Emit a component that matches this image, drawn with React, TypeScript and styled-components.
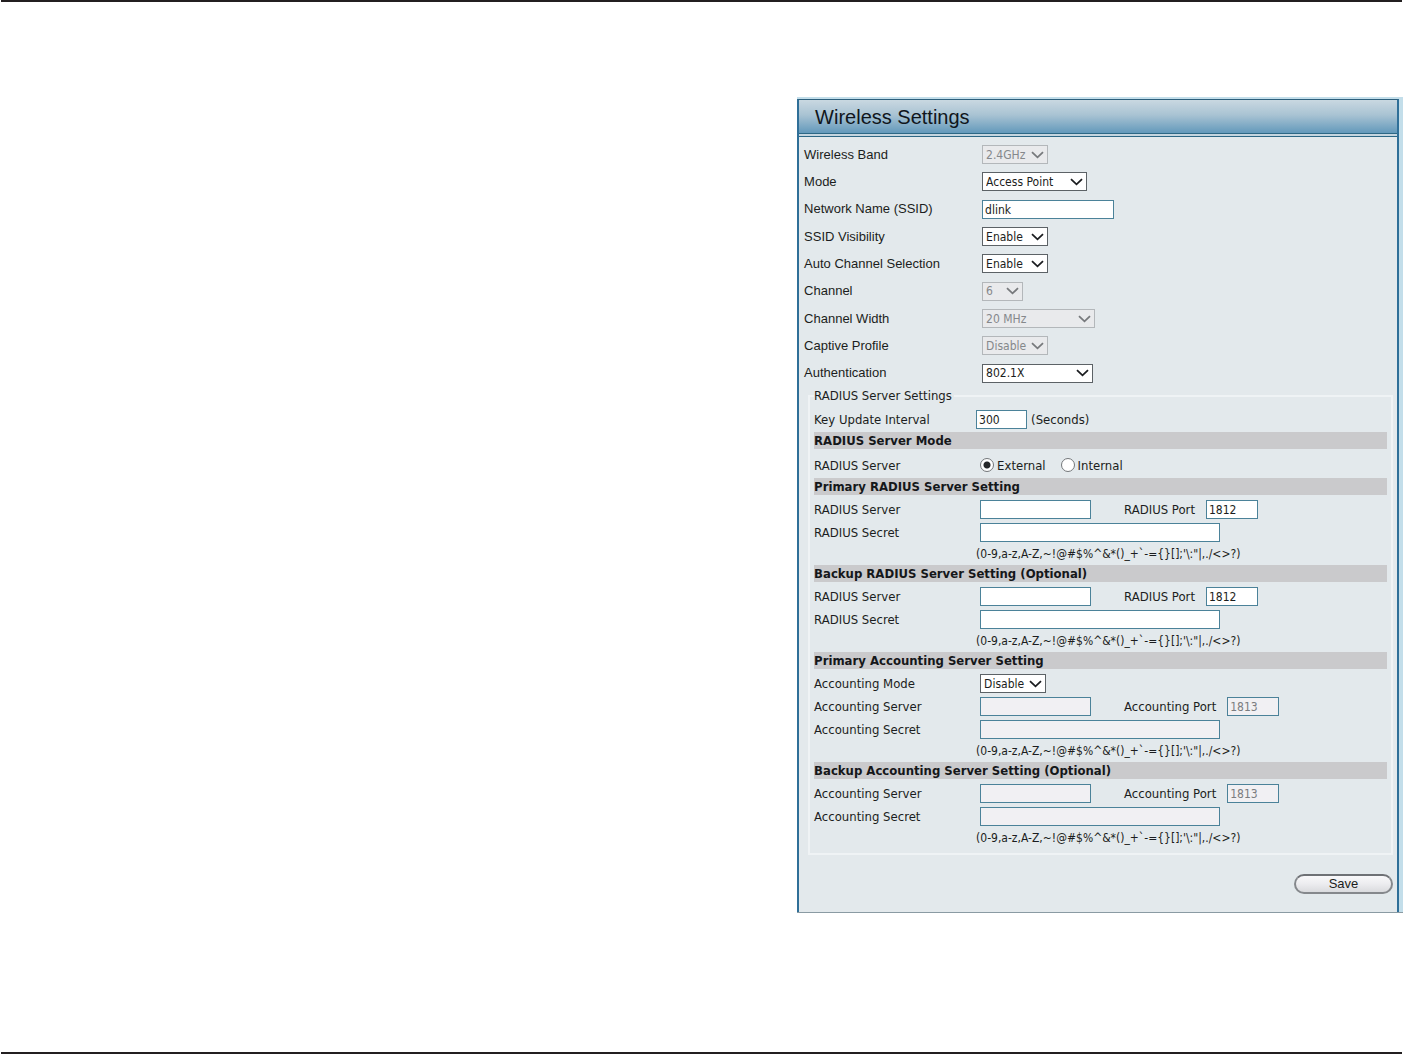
import React, { useId } from "react";
import styled, { createGlobalStyle, css } from "styled-components";

const arial = `"Liberation Sans", Arial, sans-serif`;
const tahoma = `Tahoma, "DejaVu Sans Condensed", "DejaVu Sans", sans-serif`;

const GlobalStyle = createGlobalStyle`
  *, *::before, *::after { box-sizing: border-box; }
  body { margin: 0; background: #fff; color: #1b1d20; }
`;

const Page = styled.div`
  display: flex;
  flex-direction: column;
  min-height: 100vh;
  margin: 0 1px;
  padding-top: 95px;
  border-top: 2px solid #231f20;
  border-bottom: 2px solid #231f20;
`;

const Panel = styled.main`
  align-self: flex-end;
  width: 43.25%;
  min-width: 600px;
  margin-right: -1px;
  padding: 2px 4px 0 0;
  background: #c3deea;
  border-bottom: 1px solid #8a9ba3;
`;

const Frame = styled.div`
  border: 2px solid #2f6f98;
  border-top: 1px solid #2d5f7c;
  border-bottom: 0;
  background: #e3e9ec;
`;

const TitleBar = styled.header`
  padding: 2px 16px 0;
  background: linear-gradient(#c9d8e1, #a9c3d3 45%, #6399bb);
  border-bottom: 4px double #2d6785;
`;

const Title = styled.h1`
  margin: 0;
  font: 400 20px/31px ${arial};
  color: #10161c;
`;

const Form = styled.form`
  padding: 4px 4px 18px 5px;
`;

const WirelessFields = styled.div`
  display: grid;
  grid-auto-rows: 1fr;
  min-height: 246px;
  font: 13px/18px ${arial};
`;

const WirelessRow = styled.div`
  display: grid;
  grid-template-columns: 178px 1fr;
  align-items: center;
`;

const RadiusGroup = styled.fieldset`
  min-width: 0;
  margin: -2px 0 0 4px;
  padding: 0 4px 4px;
  border: 2px solid #eff3f5;
  font: 13px/17px ${tahoma};
`;

const GroupLegend = styled.legend`
  padding: 2px 2px 2px 0;
`;

const FieldRow = styled.div<{ $flush?: boolean; $tall?: boolean }>`
  display: grid;
  grid-template-columns: ${(p) => (p.$flush ? 162 : 166)}px 1fr;
  align-items: center;
  height: ${(p) => (p.$tall ? 26 : 23)}px;
`;

const Controls = styled.div`
  display: flex;
  align-items: center;
`;

const SectionTitle = styled.h2`
  margin: 0 0 3px;
  background: #cacacc;
  font: 700 13px/17px ${tahoma};
  color: #15171a;
`;

const Hint = styled.p`
  margin: 0 0 0 162px;
  font: 12px/21px ${tahoma};
`;

const Unit = styled.span`
  padding-left: 4px;
`;

const PortLabel = styled.label`
  margin: 0 11px 0 33px;
`;

const controlFace = css`
  border: 1px solid #5c6266;
  border-radius: 0;
  background: #fff;
  color: #1b1d20;
  font: 12px/16px ${tahoma};
`;

const TextInput = styled.input<{ $width: number }>`
  ${controlFace}
  width: ${(p) => p.$width}px;
  height: 19px;
  padding: 1px 2px 0;
  border-color: #4b8299;
  &:disabled {
    background: #f1f0f3;
    color: #7b7d80;
  }
`;

const SelectBox = styled.span<{ $width: number }>`
  display: inline-grid;
  width: ${(p) => p.$width}px;
  align-items: center;
  & > * {
    grid-area: 1 / 1;
  }
`;

const SelectField = styled.select`
  ${controlFace}
  width: 100%;
  height: 19px;
  padding: 0 3px;
  appearance: none;
  &:disabled {
    border-color: #b3b7ba;
    background: #e9eaec;
    color: #85888b;
    opacity: 1;
  }
`;

const Chevron = styled.svg<{ $dim?: boolean }>`
  justify-self: end;
  margin-right: 4px;
  pointer-events: none;
  fill: none;
  stroke: ${(p) => (p.$dim ? "#77797c" : "#1b1d20")};
  stroke-width: 1.8;
`;

const RadioChoice = styled.label`
  display: flex;
  align-items: center;
  gap: 3px;
  margin-right: 15px;
`;

const RadioInput = styled.input`
  appearance: none;
  width: 14px;
  height: 14px;
  margin: 0;
  border: 1px solid #74777a;
  border-radius: 50%;
  background: #fff;
  &:checked {
    background: radial-gradient(circle, #26282a 0 3px, #fff 4px);
  }
`;

const Actions = styled.div`
  display: flex;
  justify-content: flex-end;
  padding-top: 19px;
`;

const SaveButton = styled.button`
  width: 99px;
  height: 20px;
  padding: 0;
  border: 2px solid #85888c;
  border-top-color: #6e7175;
  border-radius: 10px;
  background: linear-gradient(#f8f8fa, #ececef 50%, #dadbde);
  font: 13px/16px ${arial};
  color: #1b1d20;
`;

type SelectProps = { id: string; width: number; value: string; disabled?: boolean };

function Select({ id, width, value, disabled }: SelectProps) {
  return (
    <SelectBox $width={width}>
      <SelectField id={id} disabled={disabled} defaultValue={value}>
        <option>{value}</option>
      </SelectField>
      <Chevron $dim={disabled} width="13" height="8" viewBox="0 0 13 8" aria-hidden="true">
        <path d="M1 1.2 L6.5 6.3 L12 1.2" />
      </Chevron>
    </SelectBox>
  );
}

type WirelessField = { label: string; value: string; width: number; disabled?: boolean; text?: boolean };

const wirelessFields: WirelessField[] = [
  { label: "Wireless Band", value: "2.4GHz", width: 66, disabled: true },
  { label: "Mode", value: "Access Point", width: 105 },
  { label: "Network Name (SSID)", value: "dlink", width: 132, text: true },
  { label: "SSID Visibility", value: "Enable", width: 66 },
  { label: "Auto Channel Selection", value: "Enable", width: 66 },
  { label: "Channel", value: "6", width: 41, disabled: true },
  { label: "Channel Width", value: "20 MHz", width: 113, disabled: true },
  { label: "Captive Profile", value: "Disable", width: 66, disabled: true },
  { label: "Authentication", value: "802.1X", width: 111 },
];

function WirelessSetting({ label, value, width, disabled, text }: WirelessField) {
  const id = useId();
  return (
    <WirelessRow>
      <label htmlFor={id}>{label}</label>
      <Controls>
        {text ? (
          <TextInput id={id} $width={width} defaultValue={value} />
        ) : (
          <Select id={id} width={width} value={value} disabled={disabled} />
        )}
      </Controls>
    </WirelessRow>
  );
}

type ServerProps = { title: string; kind: "RADIUS" | "Accounting"; port: string; mode?: string; disabled?: boolean };

function ServerSection({ title, kind, port, mode, disabled }: ServerProps) {
  const id = useId();
  return (
    <section>
      <SectionTitle>{title}</SectionTitle>
      {mode && (
        <FieldRow>
          <label htmlFor={`${id}mode`}>{kind} Mode</label>
          <Controls>
            <Select id={`${id}mode`} width={66} value={mode} />
          </Controls>
        </FieldRow>
      )}
      <FieldRow>
        <label htmlFor={`${id}server`}>{kind} Server</label>
        <Controls>
          <TextInput id={`${id}server`} $width={111} disabled={disabled} />
          <PortLabel htmlFor={`${id}port`}>{kind} Port</PortLabel>
          <TextInput id={`${id}port`} $width={52} defaultValue={port} disabled={disabled} />
        </Controls>
      </FieldRow>
      <FieldRow>
        <label htmlFor={`${id}secret`}>{kind} Secret</label>
        <Controls>
          <TextInput id={`${id}secret`} type="password" $width={240} disabled={disabled} />
        </Controls>
      </FieldRow>
      <Hint>{"(0-9,a-z,A-Z,~!@#$%^&*()_+`-={}[];'\\:\"|,./<>?)"}</Hint>
    </section>
  );
}

export default function App() {
  return (
    <>
      <GlobalStyle />
      <Page>
        <Panel>
          <Frame>
            <TitleBar>
              <Title>Wireless Settings</Title>
            </TitleBar>
            <Form onSubmit={(e) => e.preventDefault()}>
              <WirelessFields>
                {wirelessFields.map((field) => (
                  <WirelessSetting key={field.label} {...field} />
                ))}
              </WirelessFields>
              <RadiusGroup>
                <GroupLegend>RADIUS Server Settings</GroupLegend>
                <FieldRow $flush $tall>
                  <label htmlFor="interval">Key Update Interval</label>
                  <Controls>
                    <TextInput id="interval" $width={51} defaultValue="300" />
                    <Unit>(Seconds)</Unit>
                  </Controls>
                </FieldRow>
                <SectionTitle>RADIUS Server Mode</SectionTitle>
                <FieldRow $tall role="radiogroup" aria-labelledby="server-mode">
                  <span id="server-mode">RADIUS Server</span>
                  <Controls>
                    <RadioChoice>
                      <RadioInput type="radio" name="server" defaultChecked />
                      External
                    </RadioChoice>
                    <RadioChoice>
                      <RadioInput type="radio" name="server" />
                      Internal
                    </RadioChoice>
                  </Controls>
                </FieldRow>
                <ServerSection title="Primary RADIUS Server Setting" kind="RADIUS" port="1812" />
                <ServerSection title="Backup RADIUS Server Setting (Optional)" kind="RADIUS" port="1812" />
                <ServerSection title="Primary Accounting Server Setting" kind="Accounting" port="1813" mode="Disable" disabled />
                <ServerSection title="Backup Accounting Server Setting (Optional)" kind="Accounting" port="1813" disabled />
              </RadiusGroup>
              <Actions>
                <SaveButton type="submit">Save</SaveButton>
              </Actions>
            </Form>
          </Frame>
        </Panel>
      </Page>
    </>
  );
}
